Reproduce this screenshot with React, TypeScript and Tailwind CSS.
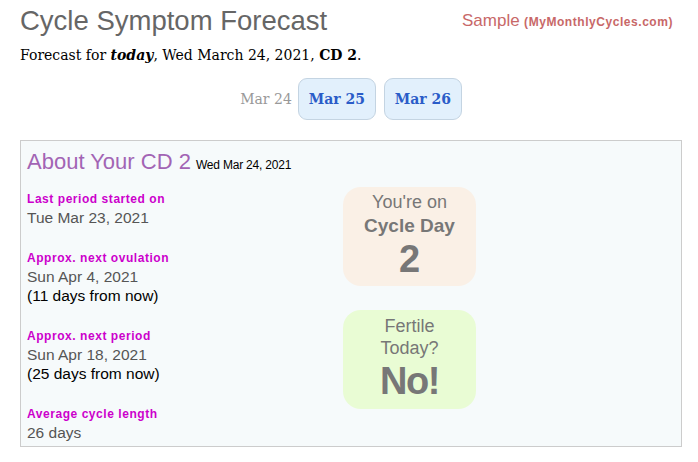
import React from "react";

const sans = { fontFamily: '"Liberation Sans", Arial, sans-serif' } as const;
const serif = { fontFamily: '"DejaVu Serif", Georgia, serif' } as const;

function Item({ label, value, extra }: { label: string; value: string; extra?: string }) {
  return (
    <div className="mb-[23px]">
      <div className="text-[12px] font-bold leading-[17px] text-[#cc00cc] tracking-[0.55px]">{label}</div>
      <div className="text-[15.5px] leading-[19px] text-[#555]">{value}</div>
      {extra && <div className="text-[15.5px] leading-[19px] text-black">{extra}</div>}
    </div>
  );
}

export default function App() {
  return (
    <div className="w-[698px] h-[462px] bg-white relative" style={sans}>
      <div className="flex items-start justify-between pl-[20px] pr-[25px] pt-[5px]">
        <div className="text-[27.5px] leading-[32px] text-[#666]">Cycle Symptom Forecast</div>
        <div className="pt-[3px] text-[#c86868]">
          <span className="text-[17px]">Sample</span>{" "}
          <span className="text-[12px] font-bold tracking-[0.55px]">(MyMonthlyCycles.com)</span>
        </div>
      </div>
      <div className="pl-[20px] mt-[8px] text-[14px] leading-[20px] text-black" style={serif}>
        Forecast for <b><i>today</i></b>, Wed March 24, 2021, <b>CD 2</b>.
      </div>
      <div className="flex justify-center items-center gap-[6px] mt-[13px] pl-[4px]" style={serif}>
        <span className="text-[14px] text-[#999] mr-[0px]">Mar 24</span>
        <div className="w-[78px] h-[42px] rounded-[9px] border border-[#c4d4e2] bg-[#e2f0fc] flex items-center justify-center text-[14px] font-bold text-[#2a5cc8]">Mar 25</div>
        <div className="w-[78px] h-[42px] rounded-[9px] border border-[#c4d4e2] bg-[#e2f0fc] flex items-center justify-center text-[14px] font-bold text-[#2a5cc8] ml-[2px]">Mar 26</div>
      </div>
      <div className="mx-[20px] mt-[20px] w-[662px] h-[307px] border border-[#cccccc] bg-[#f6fafb] px-[6px] pt-[5px]">
        <div className="flex items-baseline">
          <span className="text-[22px] leading-[32px] text-[#a264b4]">About Your CD 2</span>
          <span className="text-[12px] ml-[5px] text-black tracking-[-0.2px]">Wed Mar 24, 2021</span>
        </div>
        <div className="flex mt-[13px]">
          <div className="w-[316px]">
            <Item label="Last period started on" value="Tue Mar 23, 2021" />
            <Item label="Approx. next ovulation" value="Sun Apr 4, 2021" extra="(11 days from now)" />
            <Item label="Approx. next period" value="Sun Apr 18, 2021" extra="(25 days from now)" />
            <Item label="Average cycle length" value="26 days" />
          </div>
          <div className="flex flex-col gap-[24px] mt-[-4px]">
            <div className="w-[133px] h-[99px] rounded-[18px] bg-[#faf0e6] flex flex-col items-center pt-[4px] text-[#777]">
              <div className="text-[18px] leading-[23px]">You're on</div>
              <div className="text-[19px] leading-[23px] font-bold">Cycle Day</div>
              <div className="text-[38px] leading-[44px] font-bold">2</div>
            </div>
            <div className="w-[133px] h-[99px] rounded-[18px] bg-[#e9fcd4] flex flex-col items-center pt-[5px] text-[#777]">
              <div className="text-[18px] leading-[22px]">Fertile</div>
              <div className="text-[18px] leading-[22px]">Today?</div>
              <div className="text-[38px] leading-[44px] font-bold tracking-[-1.5px]">No!</div>
            </div>
          </div>
        </div>
      </div>
    </div>
  );
}
